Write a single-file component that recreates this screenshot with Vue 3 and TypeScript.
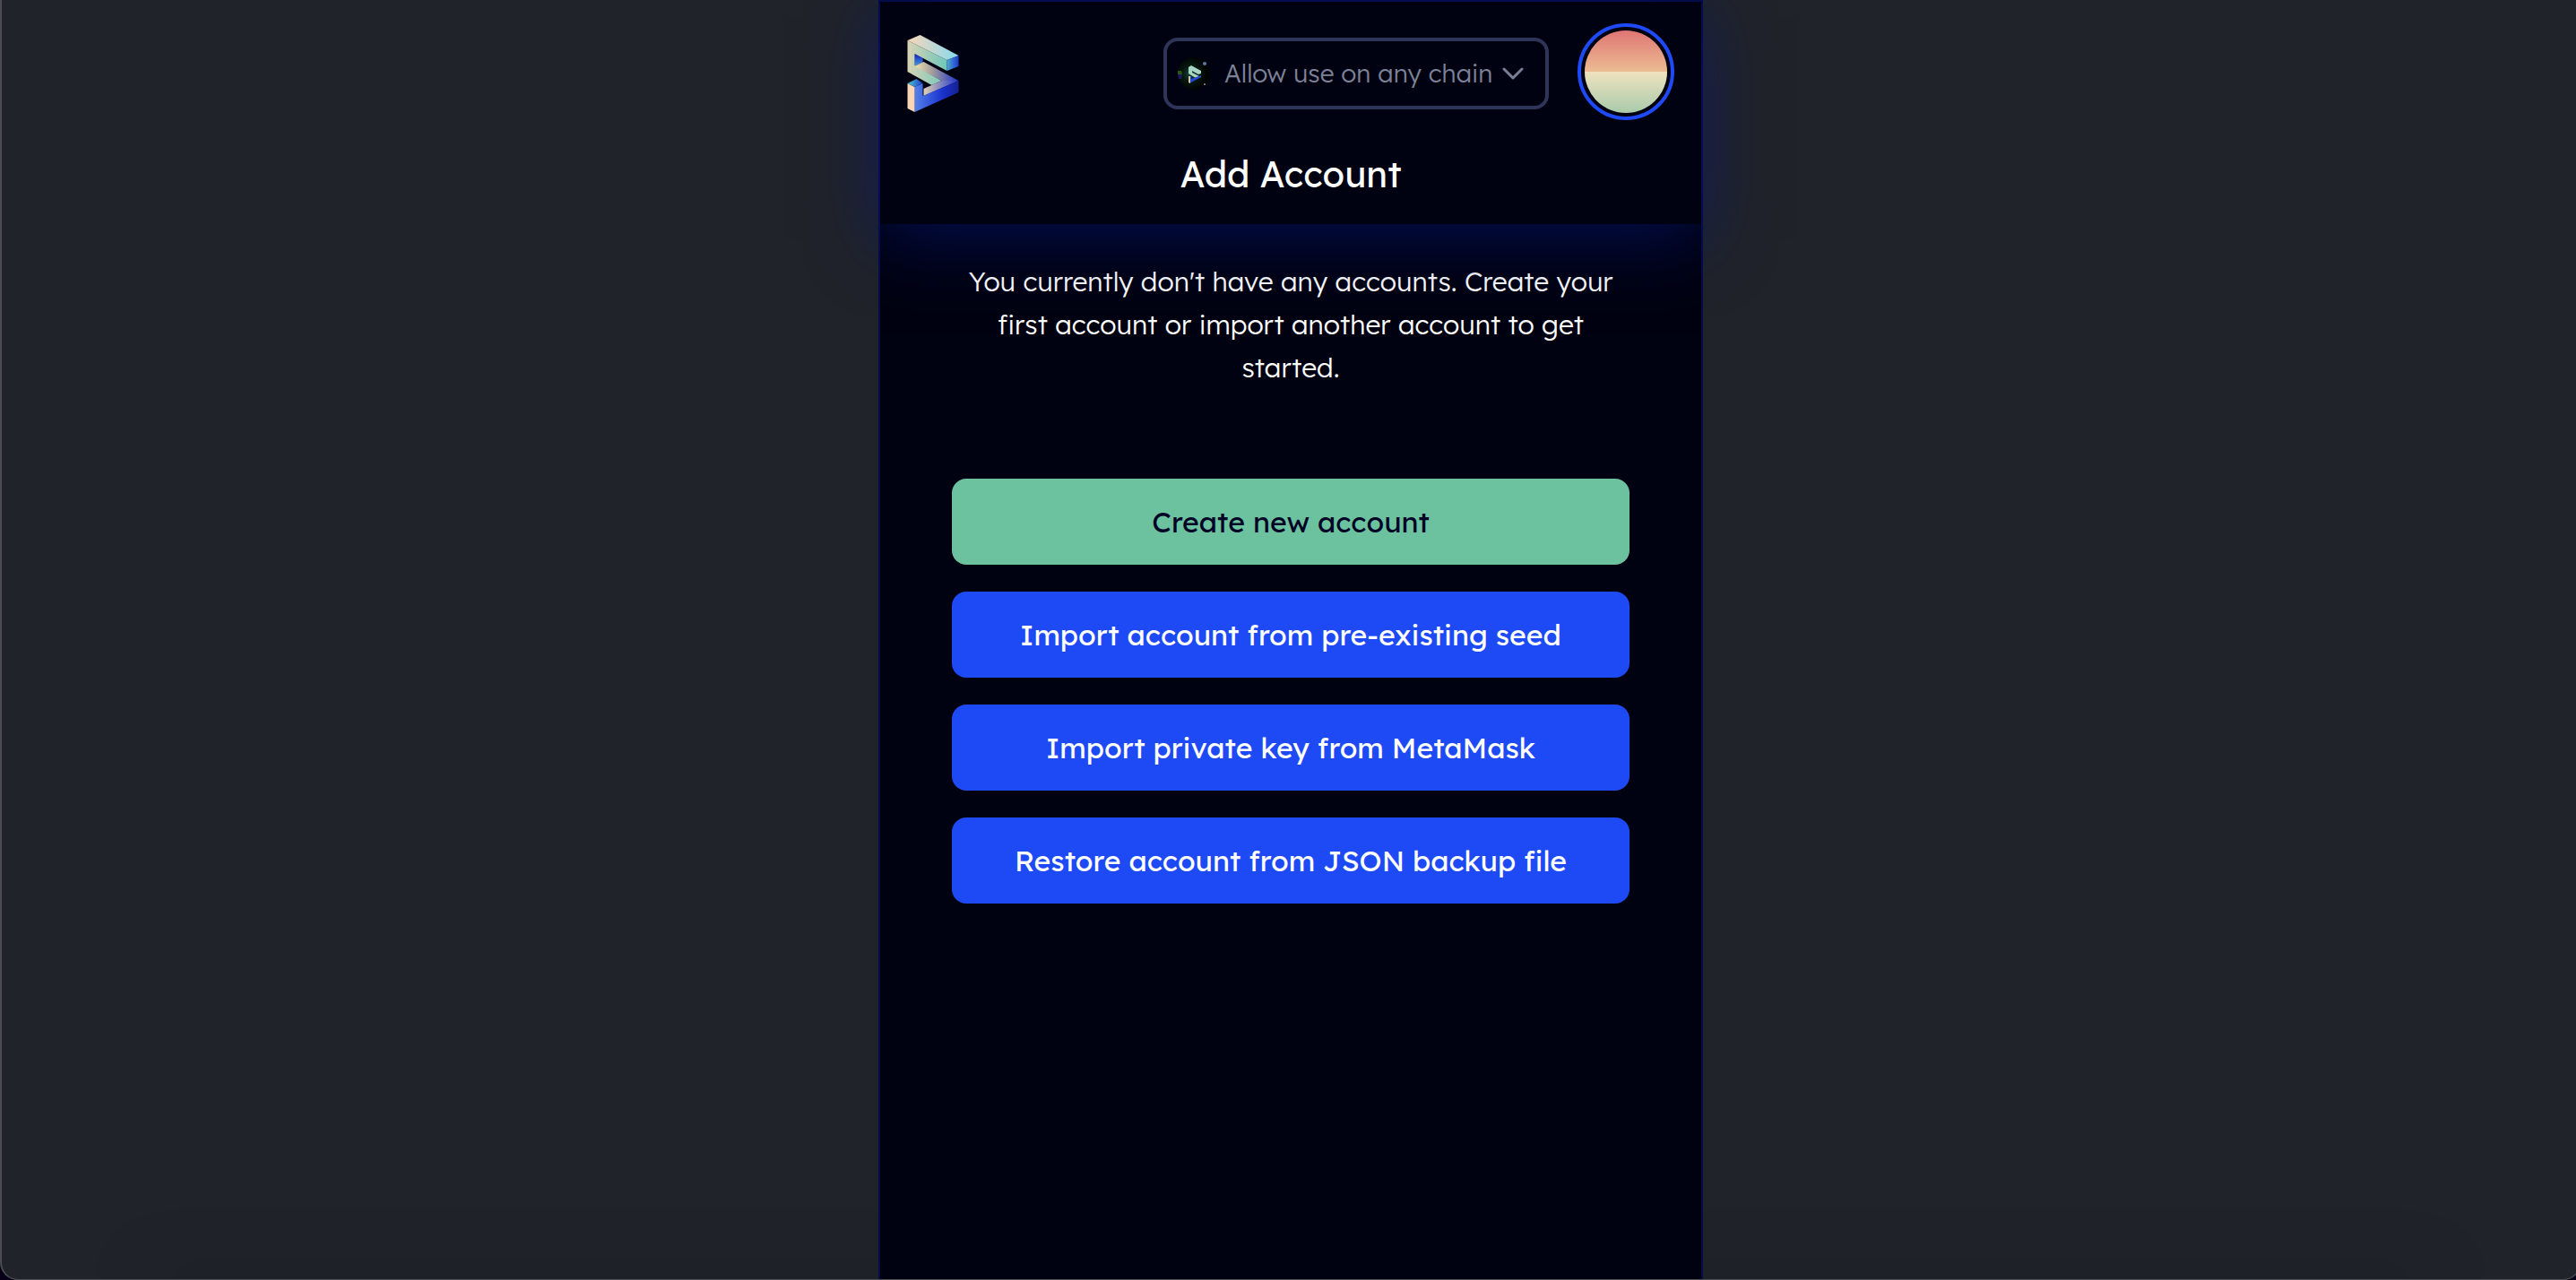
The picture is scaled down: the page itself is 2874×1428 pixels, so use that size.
<script setup lang="ts">
import { ref } from 'vue'

interface Action {
  label: string
  primary?: boolean
}

const chain = ref('any')
const actions: Action[] = [
  { label: 'Create new account', primary: true },
  { label: 'Import account from pre-existing seed' },
  { label: 'Import private key from MetaMask' },
  { label: 'Restore account from JSON backup file' },
]
</script>

<template>
  <div class="window">
    <div class="panel">
      <header class="header">
        <div class="bar">
          <svg class="logo" viewBox="0 0 57 86" aria-hidden="true">
            <defs>
              <linearGradient id="top"><stop offset="0" stop-color="#fad6b8" /><stop offset="1" stop-color="#86daee" /></linearGradient>
              <linearGradient id="face"><stop offset="0" stop-color="#d8d3b4" /><stop offset="1" stop-color="#6ec7bb" /></linearGradient>
              <linearGradient id="end"><stop offset="0" stop-color="#51a6d4" /><stop offset="1" stop-color="#1a3bcb" /></linearGradient>
              <linearGradient id="shelf"><stop offset="0" stop-color="#f5e2a8" /><stop offset=".45" stop-color="#98949f" /><stop offset="1" stop-color="#1c30cc" /></linearGradient>
              <linearGradient id="hole" x2="0" y2="1"><stop offset="0" stop-color="#0c18c4" /><stop offset="1" stop-color="#4ba2dc" /></linearGradient>
              <linearGradient id="base"><stop offset="0" stop-color="#5480ea" /><stop offset=".65" stop-color="#1931cd" /><stop offset="1" stop-color="#172191" /></linearGradient>
              <linearGradient id="inner" x1="0" y1="0" x2="1" y2="0"><stop offset="0" stop-color="#e0d0b4" /><stop offset="1" stop-color="#2035cc" /></linearGradient>
              <linearGradient id="cap"><stop offset="0" stop-color="#4fc6c8" /><stop offset="1" stop-color="#1b3dd0" /></linearGradient>
            </defs>
            <path fill="url(#hole)" d="M8 21 17 26V31L8 35Z" />
            <path fill="url(#face)" d="M0 6 44 28V40L8 21V34L38 51 27 56 0 41Z" />
            <path fill="url(#top)" d="M0 6 14 0 57 23 44 28Z" />
            <path fill="url(#end)" d="M44 28 57 23V35L44 40Z" />
            <path fill="url(#inner)" d="M18 60 38 51H57L18 68Z" />
            <path fill="url(#shelf)" d="M8 35 18 30 57 51H38Z" />
            <path fill="url(#base)" d="M8 58 17 54V68L57 51V64L8 86Z" />
            <path fill="#f9d5b9" d="M0 54 8 58V86L0 82Z" />
            <path fill="url(#cap)" d="M0 54 10 49 17 54 8 58Z" />
          </svg>

          <div class="tools">
            <div class="chain">
              <svg class="chain-icon" viewBox="0 0 36 36" aria-hidden="true">
                <defs>
                  <radialGradient id="halo" cx=".4"><stop offset="0" stop-color="#1c4a42" /><stop offset=".5" stop-color="#07180f" /><stop offset="1" stop-color="#020403" /></radialGradient>
                </defs>
                <circle cx="18" cy="18" r="18" fill="url(#halo)" />
                <path fill="#28590f" d="M0 15H4L5 19H0Z" />
                <path fill="#1b1a63" d="M0 19H5L4 24 1 24Z" />
                <circle cx="30" cy="7" r="2" fill="#5b79a5" />
                <circle cx="30" cy="30" r="1" fill="#9a9a86" />
                <path fill="#a9d6c2" d="M12 11 15 9 26 15V18L23 19 16 15V17L26 22 20 23 12 18Z" />
                <path fill="#2647ce" d="M12 21 15 21V24L26 20V22L13 29Z" />
                <path fill="#d0c7a8" d="M12 21H14V29L12 28Z" />
              </svg>
              <select v-model="chain" class="chain-select" aria-label="Chain">
                <option value="any">Allow use on any chain</option>
              </select>
              <svg class="chevron" viewBox="0 0 24 14" aria-hidden="true">
                <path d="M2 2 12 12 22 2" />
              </svg>
            </div>
            <button class="avatar" type="button" aria-label="Account menu"></button>
          </div>
        </div>
        <h1 class="title">Add Account</h1>
      </header>

      <main class="content">
        <p class="intro">
          You currently don't have any accounts. Create your first account or import another account to get started.
        </p>
        <div class="actions">
          <button
            v-for="action in actions"
            :key="action.label"
            type="button"
            class="action"
            :class="{ primary: action.primary }"
          >
            {{ action.label }}
          </button>
        </div>
      </main>
    </div>
  </div>
</template>

<style>
body {
  margin: 0;
  overflow: hidden;
  background: #08001a;
}
</style>

<style scoped>
.window {
  position: relative;
  box-sizing: border-box;
  display: flex;
  justify-content: center;
  width: calc(100% + 6px);
  min-height: 100vh;
  overflow: hidden;
  border: solid #4b4d51;
  border-width: 0 2px 1px;
  border-radius: 0 0 20px 20px;
  background: #20232a;
  font-family: Lexend, Inter, sans-serif;
  color: #fff;
}

.window::after {
  content: '';
  position: absolute;
  right: 160px;
  bottom: 0;
  left: 160px;
  box-shadow: 0 0 70px 4px rgba(24, 12, 12, 0.4);
}

.panel {
  position: relative;
  z-index: 1;
  box-sizing: border-box;
  width: 920px;
  border: 2px solid #040c47;
  border-bottom: 0;
  background: #010211;
}

.header {
  position: relative;
  box-sizing: border-box;
  height: 248px;
  padding: 24px 30px 0;
  background: #010211;
  box-shadow: 0 16px 72px rgba(5, 22, 118, 0.6);
}

.bar {
  display: flex;
  align-items: center;
  justify-content: space-between;
}

.logo {
  width: 58px;
  height: 86px;
  margin-top: 4px;
}

.tools {
  display: flex;
  align-items: center;
  gap: 32px;
}

.chain {
  position: relative;
  box-sizing: border-box;
  display: flex;
  align-items: center;
  width: 430px;
  height: 80px;
  margin-top: 4px;
  padding-left: 12px;
  border: 4px solid #2e3559;
  border-radius: 16px;
}

.chain-icon {
  width: 36px;
  height: 36px;
}

.chain-select {
  flex: 1;
  height: 100%;
  padding: 0 0 0 16px;
  border: 0;
  background: transparent;
  font: 300 28px/36px Lexend, Inter, sans-serif;
  color: #7e8298;
  appearance: none;
}

.chevron {
  position: absolute;
  right: 24px;
  width: 24px;
  height: 14px;
  fill: none;
  stroke: #7b7f95;
  stroke-width: 3;
  stroke-linecap: round;
  stroke-linejoin: round;
  pointer-events: none;
}

.avatar {
  box-sizing: border-box;
  width: 108px;
  height: 108px;
  padding: 4px;
  border: 4px solid #1e4bf7;
  border-radius: 50%;
  background: linear-gradient(#df7673, #ebbc93 50%, #efe2be 50%, #a9cbab) content-box;
  background-clip: content-box;
}

.title {
  margin: 34px 0 0;
  font-size: 40px;
  font-weight: 400;
  line-height: 52px;
  text-align: center;
}

.content {
  padding: 40px 80px 0;
}

.intro {
  margin: 0 0 100px;
  font-size: 30px;
  font-weight: 300;
  line-height: 48px;
  text-align: center;
}

.actions {
  display: flex;
  flex-direction: column;
  gap: 30px;
}

.action {
  height: 96px;
  padding: 0 16px;
  border: 0;
  border-radius: 16px;
  background: #1e4af6;
  font: 400 32px/48px Lexend, Inter, sans-serif;
  color: #fff;
}

.action.primary {
  background: #6cc29e;
  color: #010326;
}
</style>
